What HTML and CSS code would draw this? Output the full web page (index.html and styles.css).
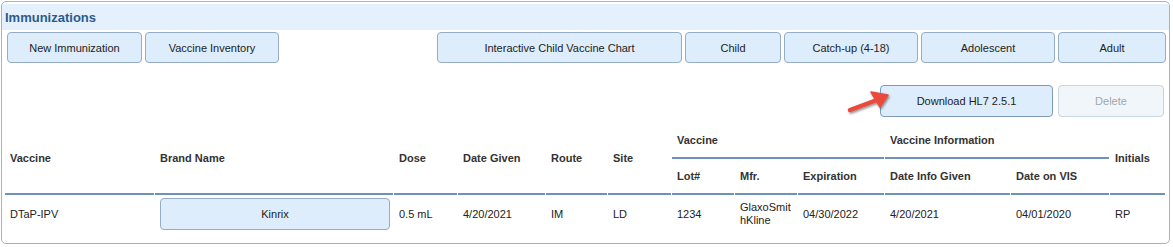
FILE: index.html
```html
<!DOCTYPE html>
<html lang="en">
<head>
    <meta charset="UTF-8">
    <title>Immunizations</title>
    <link rel="stylesheet" href="styles.css">
</head>
<body>
    <div class="panel">
        <div class="panel-header">
            <h2>Immunizations</h2>
        </div>

        <div class="toolbar">
            <div class="toolbar-left">
                <button class="btn w-new">New Immunization</button>
                <button class="btn w-inv">Vaccine Inventory</button>
            </div>
            <div class="toolbar-right">
                <button class="btn w-chart">Interactive Child Vaccine Chart</button>
                <button class="btn w-child">Child</button>
                <button class="btn w-std">Catch-up (4-18)</button>
                <button class="btn w-std">Adolescent</button>
                <button class="btn w-adult">Adult</button>
            </div>
        </div>

        <div class="actions">
            <svg class="pointer" width="50" height="30" viewBox="0 0 50 30">
                <defs>
                    <filter id="shadow" x="-30%" y="-30%" width="160%" height="160%">
                        <feDropShadow dx="1" dy="1.5" stdDeviation="1" flood-color="#000" flood-opacity="0.45"/>
                    </filter>
                </defs>
                <g filter="url(#shadow)" fill="#ea4a3e" stroke="#ea4a3e" stroke-linecap="round" stroke-linejoin="round">
                    <line x1="7" y1="22" x2="34" y2="12" stroke-width="4.5"/>
                    <polygon points="45,7 28,4 37,19" stroke-width="1.5"/>
                </g>
            </svg>
            <button class="btn btn-tall w-hl7">Download HL7 2.5.1</button>
            <button class="btn btn-tall w-del" disabled>Delete</button>
        </div>

        <table class="imm-table">
            <colgroup>
                <col style="width: 149px">
                <col style="width: 238px">
                <col style="width: 63px">
                <col style="width: 87px">
                <col style="width: 61px">
                <col style="width: 63px">
                <col style="width: 62px">
                <col style="width: 62px">
                <col style="width: 86px">
                <col style="width: 125px">
                <col style="width: 98px">
                <col style="width: 55px">
            </colgroup>
            <thead>
                <tr class="group-row">
                    <th rowspan="2">Vaccine</th>
                    <th rowspan="2">Brand Name</th>
                    <th rowspan="2">Dose</th>
                    <th rowspan="2">Date Given</th>
                    <th rowspan="2">Route</th>
                    <th rowspan="2">Site</th>
                    <th colspan="3" class="group">Vaccine</th>
                    <th colspan="2" class="group">Vaccine Information</th>
                    <th rowspan="2">Initials</th>
                </tr>
                <tr class="sub-row">
                    <th>Lot#</th>
                    <th>Mfr.</th>
                    <th>Expiration</th>
                    <th>Date Info Given</th>
                    <th>Date on VIS</th>
                </tr>
            </thead>
            <tbody>
                <tr>
                    <td>DTaP-IPV</td>
                    <td><button class="btn brand-btn">Kinrix</button></td>
                    <td>0.5 mL</td>
                    <td>4/20/2021</td>
                    <td>IM</td>
                    <td>LD</td>
                    <td>1234</td>
                    <td class="wrap">GlaxoSmithKline</td>
                    <td>04/30/2022</td>
                    <td>4/20/2021</td>
                    <td>04/01/2020</td>
                    <td>RP</td>
                </tr>
            </tbody>
        </table>
    </div>
</body>
</html>
```

FILE: styles.css
```css
body {
    margin: 0;
    font-family: 'Liberation Sans', Arial, sans-serif;
    font-size: 11px;
    color: #222;
    background-color: #fff;
}

.panel {
    margin: 1px 0 0 1px;
    width: 1169px;
    height: 243px;
    box-sizing: border-box;
    border: 1px solid #a3b3c4;
    border-radius: 5px;
}

.panel-header {
    margin-top: 2px;
    height: 26px;
    background-color: #e4f1fc;
}

    .panel-header h2 {
        margin: 0;
        padding-left: 3px;
        font-size: 13px;
        line-height: 27px;
        font-weight: bold;
        color: #2b5b8b;
    }

.toolbar {
    display: flex;
    justify-content: space-between;
    margin-top: 2px;
    padding: 0 3px 0 5px;
}

.toolbar-left, .toolbar-right {
    display: flex;
    gap: 3px;
}

.btn {
    height: 31px;
    padding: 0;
    font-family: 'Liberation Sans', Arial, sans-serif;
    font-size: 11px;
    color: #222;
    background-color: #deedfb;
    border: 1px solid #94acc4;
    border-radius: 4px;
    cursor: pointer;
}

    .btn:disabled {
        color: #a2a6ab;
        background-color: #f1f6fb;
        border-color: #c8d5e2;
        cursor: default;
    }

.btn-tall {
    height: 32px;
}

.w-new { width: 135px; }
.w-inv { width: 134px; }
.w-chart { width: 245px; }
.w-child { width: 96px; }
.w-std { width: 134px; }
.w-adult { width: 108px; }
.w-hl7 { width: 173px; border-color: #7f9bb8; }
.w-del { width: 106px; }

.actions {
    position: relative;
    display: flex;
    justify-content: flex-end;
    gap: 5px;
    margin-top: 22px;
    padding-right: 5px;
}

.pointer {
    position: absolute;
    left: 841px;
    top: 3px;
}

.imm-table {
    margin: 5px 0 0 2px;
    width: 1162px;
    table-layout: fixed;
    border-collapse: separate;
    border-spacing: 1px 0;
}

    .imm-table th,
    .imm-table td {
        box-sizing: border-box;
        padding: 0 5px;
        text-align: left;
        vertical-align: middle;
    }

    .imm-table th {
        font-weight: bold;
        color: #333;
        border-bottom: 2px solid #6f93b8;
    }

.group-row th {
    height: 37px;
}

.sub-row th {
    height: 36px;
}

.imm-table tbody td {
    height: 36px;
    padding-top: 1px;
}

.imm-table td.wrap {
    word-break: break-all;
    line-height: 13px;
}

.brand-btn {
    display: block;
    width: 230px;
    height: 32px;
}
```
